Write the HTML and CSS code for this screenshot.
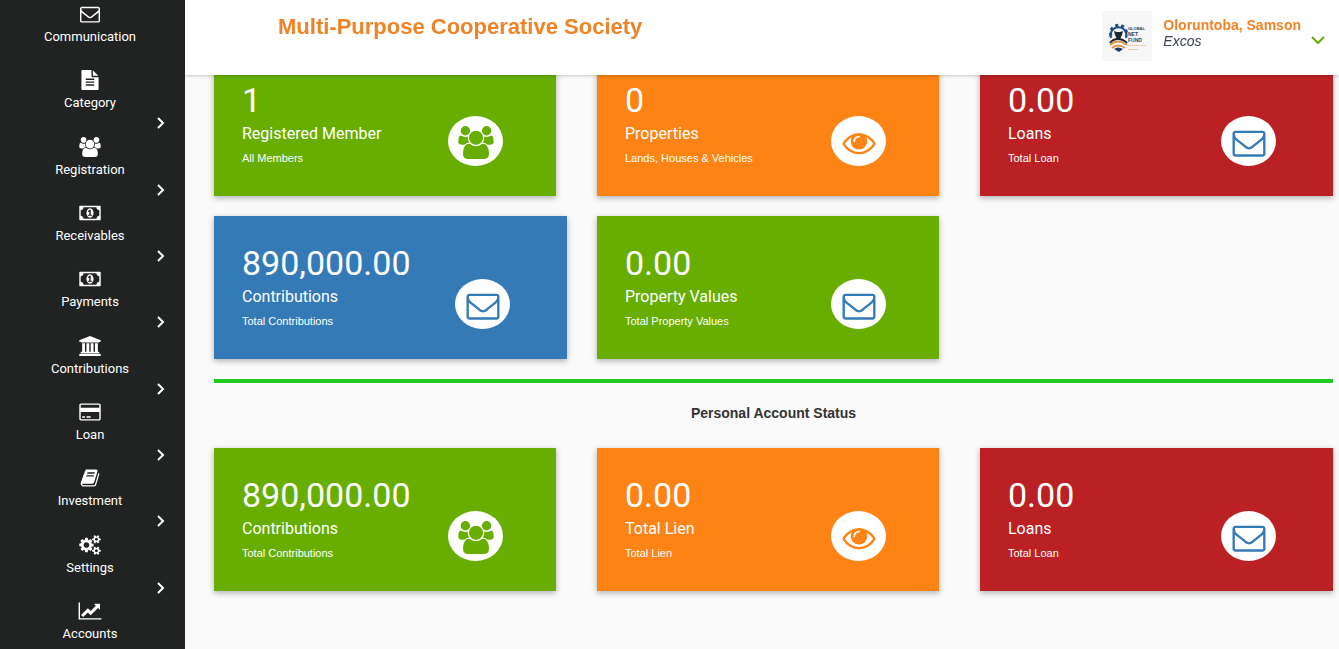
FILE: index.html
```html
<!DOCTYPE html>
<html lang="en">

<head>
    <meta charset="UTF-8">
    <meta name="viewport" content="width=device-width, initial-scale=1.0">
    <title>Multi-Purpose Cooperative Society</title>
    <link rel="stylesheet" href="styles.css">
</head>

<body>
    <!-- shared icons -->
    <svg class="sprite" aria-hidden="true">
        <symbol id="envelope" viewBox="0 0 1792 1792">
            <path d="M1664 1504v-768q-32 36-69 66-268 206-426 338-51 43-83 67t-86.500 48.500-102.500 24.500h-2q-48 0-102.500-24.500t-86.500-48.500-83-67q-158-132-426-338-37-30-69-66v768q0 13 9.500 22.500t22.500 9.500h1472q13 0 22.500-9.500t9.500-22.500zm0-1051v-24.500l-.5-13-3-12.500-5.500-9-9-7.500-14-2.500h-1472q-13 0-22.500 9.500t-9.500 22.500q0 168 147 284 193 152 401 317 6 5 35 29.500t46 37.500 44.500 31.500 50.500 27.500 43 9h2q20 0 43-9t50.500-27.500 44.500-31.500 46-37.500 35-29.500q208-165 401-317 54-43 100.500-115.500t46.500-131.500zm128-37v1088q0 66-47 113t-113 47h-1472q-66 0-113-47t-47-113v-1088q0-66 47-113t113-47h1472q66 0 113 47t47 113z"/>
        </symbol>
        <symbol id="users" viewBox="0 0 1920 1792">
            <path d="M593 896q-162 5-265 128h-134q-82 0-138-40.500t-56-118.500q0-353 124-353 6 0 43.500 21t97.500 42.500 119 21.500q67 0 133-23-5 37-5 66 0 139 81 256zm1071 637q0 120-73 189.500t-194 69.500h-874q-121 0-194-69.500t-73-189.500q0-53 3.500-103.500t14-109 26.500-108.500 43-97.500 62-81 85.500-53.500 111.500-20q10 0 43 21.500t73 48 107 48 135 21.500 135-21.500 107-48 73-48 43-21.500q61 0 111.500 20t85.500 53.500 62 81 43 97.500 26.500 108.500 14 109 3.500 103.500zm-1024-1277q0 106-75 181t-181 75-181-75-75-181 75-181 181-75 181 75 75 181zm704 384q0 159-112.500 271.500t-271.500 112.500-271.500-112.500-112.500-271.500 112.500-271.500 271.500-112.500 271.500 112.500 112.500 271.500zm576 225q0 78-56 118.500t-138 40.500h-134q-103-123-265-128 81-117 81-256 0-29-5-66 66 23 133 23 59 0 119-21.500t97.500-42.500 43.500-21q124 0 124 353zm-128-609q0 106-75 181t-181 75-181-75-75-181 75-181 181-75 181 75 75 181z"/>
        </symbol>
        <symbol id="eye" viewBox="0 0 1792 1792">
            <path d="M1664 960q-152-236-381-353 61 104 61 225 0 185-131.500 316.500t-316.500 131.500-316.500-131.500-131.500-316.500q0-121 61-225-229 117-381 353 133 205 333.500 326.500t434.500 121.500 434.500-121.500 333.500-326.500zm-720-384q0-20-14-34t-34-14q-125 0-214.500 89.500t-89.500 214.500q0 20 14 34t34 14 34-14 14-34q0-86 61-147t147-61q20 0 34-14t14-34zm848 384q0 34-20 69-140 230-376.500 368.500t-499.500 138.500-499.500-139-376.500-368q-20-35-20-69t20-69q140-229 376.500-368t499.500-139 499.500 139 376.500 368q20 35 20 69z"/>
        </symbol>
        <symbol id="file" viewBox="0 0 1792 1792">
            <path d="M1596 476q14 14 28 36h-472v-472q22 14 36 28zm-476 164h544v1056q0 40-28 68t-68 28h-1344q-40 0-68-28t-28-68v-1600q0-40 28-68t68-28h800v544q0 40 28 68t68 28zm160 736v-64q0-14-9-23t-23-9h-704q-14 0-23 9t-9 23v64q0 14 9 23t23 9h704q14 0 23-9t9-23zm0-256v-64q0-14-9-23t-23-9h-704q-14 0-23 9t-9 23v64q0 14 9 23t23 9h704q14 0 23-9t9-23zm0-256v-64q0-14-9-23t-23-9h-704q-14 0-23 9t-9 23v64q0 14 9 23t23 9h704q14 0 23-9t9-23z"/>
        </symbol>
        <symbol id="money" viewBox="0 0 1920 1792">
            <path fill-rule="evenodd" d="M768 1152h384v-96h-128v-448h-114l-148 137 77 80q42-37 55-57h2v288h-128v96zm512-256q0 70-21 142t-59.500 134-101.500 101-138 39-138-39-101.500-101-59.500-134-21-142 21-142 59.500-134 101.500-101 138-39 138 39 101.500 101 59.500 134 21 142zm512 256v-512q-106 0-181-75t-75-181h-1152q0 106-75 181t-181 75v512q106 0 181 75t75 181h1152q0-106 75-181t181-75zm128-832v1152q0 26-19 45t-45 19h-1792q-26 0-45-19t-19-45v-1152q0-26 19-45t45-19h1792q26 0 45 19t19 45z"/>
        </symbol>
        <symbol id="bank" viewBox="0 0 1920 1792">
            <path d="M960 0l960 384v128h-128q0 26-20.500 45t-48.500 19h-1526q-28 0-48.500-19t-20.500-45h-128v-128zm-704 640h256v768h128v-768h256v768h128v-768h256v768h128v-768h256v768h59q28 0 48.500 19t20.500 45v64h-1664v-64q0-26 20.500-45t48.500-19h59v-768zm1595 960q28 0 48.500 19t20.500 45v128h-1920v-128q0-26 20.500-45t48.500-19h1782z"/>
        </symbol>
        <symbol id="card" viewBox="0 0 1920 1792">
            <path fill-rule="evenodd" d="M160 128h1600q66 0 113 47t47 113v1216q0 66-47 113t-113 47h-1600q-66 0-113-47t-47-113v-1216q0-66 47-113t113-47zm0 128q-32 0-32 32v224h1664v-224q0-32-32-32zm-32 640v608q0 32 32 32h1600q32 0 32-32v-608zm128 384h256v128h-256zm384 0h384v128h-384z"/>
        </symbol>
        <symbol id="book" viewBox="0 0 1792 1792">
            <path d="M1703 478q40 57 18 129l-275 906q-19 64-76.500 107.500t-122.500 43.500h-923q-77 0-148.500-53.500t-99.500-131.500q-24-67-2-127 0-4 3-27t4-37q1-8-3-21.500t-3-19.500q2-11 8-21t16.500-23.500 16.500-23.500q23-38 45-91.500t30-91.500q3-10 .5-30t-.5-28q3-11 17-28t17-23q21-36 42-92t25-90q1-9-2.500-32t.5-28q4-13 22-30.500t22-22.500q19-26 42.500-84.500t27.500-96.500q1-8-3-25.500t-2-26.500q2-8 9-18t18-23 17-21q8-12 16.500-30.500t15-35 16-36 19.500-32 26.500-23.500 36-11.500 47.500 5.500l-1 3q38-9 51-9h761q74 0 114 56t18 130l-274 906q-36 119-71.500 153.500t-128.500 34.500h-869q-27 0-38 15-11 16-1 43 24 70 144 70h923q29 0 56-15.500t35-41.500l300-987q7-22 5-57 38 15 59 43zm-1064 2q-4 13 2 22.500t20 9.500h608q13 0 25.500-9.500t16.500-22.500l21-64q4-13-2-22.500t-20-9.500h-608q-13 0-25.500 9.500t-16.500 22.500zm-83 256q-4 13 2 22.500t20 9.500h608q13 0 25.500-9.500t16.500-22.500l21-64q4-13-2-22.500t-20-9.500h-608q-13 0-25.500 9.500t-16.500 22.500z"/>
        </symbol>
        <symbol id="cogs" viewBox="0 0 1920 1792">
            <path fill-rule="evenodd" d="M896 896q0-106-75-181t-181-75-181 75-75 181 75 181 181 75 181-75 75-181zm384-91v185q0 10-7 19.500t-16 10.500l-155 24q-11 35-32 76 34 48 90 115 7 11 7 20 0 12-7 19-23 30-82.500 89.500t-78.500 59.500q-11 0-21-7l-115-90q-37 19-77 31-11 108-23 155-7 24-30 24h-186q-11 0-20-7.500t-10-17.500l-23-153q-34-10-75-31l-118 89q-7 7-20 7-11 0-21-8-144-133-144-160 0-9 7-19 10-14 41-53t47-61q-23-44-35-82l-152-24q-10-1-17-9.500t-7-19.500v-185q0-10 7-19.500t16-10.500l155-24q11-35 32-76-34-48-90-115-7-11-7-20 0-12 7-20 22-30 82-89t79-59q11 0 21 7l115 90q34-18 77-32 11-108 23-154 7-24 30-24h186q11 0 20 7.500t10 17.500l23 153q34 10 75 31l118-89q8-7 20-7 11 0 21 8 144 133 144 160 0 8-7 19-12 16-42 54t-45 60q23 48 34 82l152 23q10 2 17 10.500t7 19.500z"/>
            <path id="cog" fill-rule="evenodd" d="M1664 1408q0-52-38-90t-90-38-90 38-38 90q0 53 37.500 90.500t90.500 37.500 90.500-37.500 37.500-90.500zM1920 1338v140q0 16-149 31-12 27-30 52 51 113 51 138 0 4-4 7-122 71-124 71-8 0-46-47t-52-68q-20 2-30 2t-30-2q-14 21-52 68t-46 47q-2 0-124-71-4-3-4-7 0-25 51-138-18-25-30-52-149-15-149-31v-140q0-16 149-31 13-29 30-52-51-113-51-138 0-4 4-7 4-2 35-20t59-34 30-16q8 0 46 46.500t52 67.500q20-2 30-2t30 2q51-71 92-112l6-2q4 0 124 70 4 3 4 7 0 25-51 138 17 23 30 52 149 15 149 31z"/>
            <use href="#cog" y="-1024"/>
        </symbol>
        <symbol id="chart" viewBox="0 0 2048 1792">
            <path d="M2048 1536v128h-2048v-1536h128v1408h1920zm-128-1248v435q0 21-19.500 29.500t-35.500-7.500l-121-121-633 633q-10 10-23 10t-23-10l-233-233-416 416-192-192 585-585q10-10 23-10t23 10l233 233 464-464-121-121q-16-16-7.500-35.500t29.500-19.500h435q14 0 23 9t9 23z"/>
        </symbol>
        <symbol id="arrow" viewBox="0 0 8 12">
            <path d="M1 1l5 5-5 5" fill="none" stroke="currentColor" stroke-width="2"/>
        </symbol>
    </svg>

    <nav class="sidebar">
        <ul class="menu">
            <li><a href="#"><svg class="icon"><use href="#envelope"/></svg>Communication</a></li>
            <li><a href="#"><svg class="icon"><use href="#file"/></svg>Category<svg class="arrow"><use href="#arrow"/></svg></a></li>
            <li><a href="#"><svg class="icon"><use href="#users"/></svg>Registration<svg class="arrow"><use href="#arrow"/></svg></a></li>
            <li><a href="#"><svg class="icon"><use href="#money"/></svg>Receivables<svg class="arrow"><use href="#arrow"/></svg></a></li>
            <li><a href="#"><svg class="icon"><use href="#money"/></svg>Payments<svg class="arrow"><use href="#arrow"/></svg></a></li>
            <li><a href="#"><svg class="icon"><use href="#bank"/></svg>Contributions<svg class="arrow"><use href="#arrow"/></svg></a></li>
            <li><a href="#"><svg class="icon"><use href="#card"/></svg>Loan<svg class="arrow"><use href="#arrow"/></svg></a></li>
            <li><a href="#"><svg class="icon"><use href="#book"/></svg>Investment<svg class="arrow"><use href="#arrow"/></svg></a></li>
            <li><a href="#"><svg class="icon"><use href="#cogs"/></svg>Settings<svg class="arrow"><use href="#arrow"/></svg></a></li>
            <li><a href="#"><svg class="icon"><use href="#chart"/></svg>Accounts</a></li>
        </ul>
    </nav>

    <header class="header">
        <h1>Multi-Purpose Cooperative Society</h1>
        <button class="account" type="button">
            <svg class="logo" viewBox="0 0 50 50" role="img" aria-label="Global Net Fund">
                <rect width="50" height="50" fill="#f7f7f7"/>
                <!-- half gear with teeth -->
                <path d="M9 27a8 8 0 1 1 15 0" fill="none" stroke="#1c4f86" stroke-width="2"/>
                <path d="M9 25a8 8 0 1 1 15 0" fill="none" stroke="#1c4f86" stroke-width="3" stroke-dasharray="3 3"/>
                <path d="M12 20l3 1h3l3-1-1 4-2 4h-3l-2-4z" fill="#1d2633"/>
                <path d="M8 32q3-4 8-4t9 4" fill="none" stroke="#1d2633" stroke-width="2"/>
                <path d="M8 34q8-7 17 0M10 37q6-5 13 0" fill="none" stroke="#e0964f" stroke-width="2"/>
                <path d="M12 38q4-3 9 0l-4 3z" fill="#1c3c66"/>
                <g font-family="Liberation Sans, Arial, sans-serif" font-weight="bold" font-size="5" fill="#1d4463">
                    <text x="26" y="19" font-size="4">GLOBAL</text>
                    <text x="26" y="25">NET</text>
                    <text x="26" y="31">FUND</text>
                </g>
                <g font-family="Liberation Sans, Arial, sans-serif" font-weight="bold" font-size="2.500" fill="#e0964f">
                    <text x="26" y="35">COOPERATIVE</text>
                    <text x="26" y="39">SOCIETY</text>
                </g>
            </svg>
            <span class="who">
                <strong>Oloruntoba, Samson</strong>
                <em>Excos</em>
            </span>
            <svg class="caret" viewBox="0 0 14 8"><path d="M1 1l6 6 6-6" fill="none" stroke="currentColor" stroke-width="2"/></svg>
        </button>
    </header>

    <main class="content">
        <section class="cards">
            <div class="card green narrow">
                <div class="card-text">
                    <p class="number">1</p>
                    <h3>Registered Member</h3>
                    <p class="note">All Members</p>
                </div>
                <span class="bubble"><svg><use href="#users"/></svg></span>
            </div>
            <div class="card orange narrow">
                <div class="card-text">
                    <p class="number">0</p>
                    <h3>Properties</h3>
                    <p class="note">Lands, Houses &amp; Vehicles</p>
                </div>
                <span class="bubble"><svg><use href="#eye"/></svg></span>
            </div>
            <div class="card red">
                <div class="card-text">
                    <p class="number">0.00</p>
                    <h3>Loans</h3>
                    <p class="note">Total Loan</p>
                </div>
                <span class="bubble mail"><svg><use href="#envelope"/></svg></span>
            </div>
            <div class="card blue">
                <div class="card-text">
                    <p class="number">890,000.00</p>
                    <h3>Contributions</h3>
                    <p class="note">Total Contributions</p>
                </div>
                <span class="bubble mail"><svg><use href="#envelope"/></svg></span>
            </div>
            <div class="card green narrow">
                <div class="card-text">
                    <p class="number">0.00</p>
                    <h3>Property Values</h3>
                    <p class="note">Total Property Values</p>
                </div>
                <span class="bubble mail"><svg><use href="#envelope"/></svg></span>
            </div>
        </section>

        <hr>
        <h2>Personal Account Status</h2>

        <section class="cards">
            <div class="card green narrow">
                <div class="card-text">
                    <p class="number">890,000.00</p>
                    <h3>Contributions</h3>
                    <p class="note">Total Contributions</p>
                </div>
                <span class="bubble"><svg><use href="#users"/></svg></span>
            </div>
            <div class="card orange narrow">
                <div class="card-text">
                    <p class="number">0.00</p>
                    <h3>Total Lien</h3>
                    <p class="note">Total Lien</p>
                </div>
                <span class="bubble"><svg><use href="#eye"/></svg></span>
            </div>
            <div class="card red">
                <div class="card-text">
                    <p class="number">0.00</p>
                    <h3>Loans</h3>
                    <p class="note">Total Loan</p>
                </div>
                <span class="bubble mail"><svg><use href="#envelope"/></svg></span>
            </div>
        </section>
    </main>
</body>
</html>
```
FILE: styles.css
```css
* {
    box-sizing: border-box;
}
body {
    margin: 0;
    background: #fafafa;
    color: #333;
    font-family: "Liberation Sans", Arial, sans-serif;
}
h1, h2, h3, p, ul {
    margin: 0;
    padding: 0;
}
.sprite {
    position: absolute;
    width: 0;
    height: 0;
}

/* sidebar */
.sidebar {
    position: fixed;
    top: 0;
    bottom: 0;
    left: 0;
    width: 185px;
    background: #212322;
}
.menu {
    display: flex;
    flex-direction: column;
    justify-content: space-between;
    height: 100%;
    list-style: none;
}
.menu a {
    position: relative;
    display: flex;
    flex-direction: column;
    align-items: center;
    padding: 4px 5px 5px 0;
    color: #fff;
    font-family: Roboto, sans-serif;
    font-size: 13px;
    line-height: 20px;
    text-decoration: none;
}
.icon {
    width: 24px;
    height: 20px;
    margin-bottom: 3px;
    fill: currentColor;
}
.arrow {
    position: absolute;
    right: 20px;
    bottom: -11px;
    width: 8px;
    height: 12px;
}

/* header */
.header {
    position: fixed;
    top: 0;
    left: 185px;
    right: 0;
    z-index: 1;
    display: flex;
    justify-content: space-between;
    align-items: flex-start;
    height: 75px;
    padding: 11px 14px 0 93px;
    background: #fff;
    box-shadow: 0 1px 3px rgba(0, 0, 0, 0.2);
}
.header h1 {
    color: #ee8427;
    font-size: 22px;
    line-height: 32px;
}
.account {
    display: flex;
    padding: 0;
    border: none;
    background: none;
    font-family: inherit;
    text-align: left;
    cursor: pointer;
}
.logo {
    width: 50px;
    height: 50px;
    margin-right: 11px;
}
.who {
    display: flex;
    flex-direction: column;
    padding-top: 6px;
    font-size: 14px;
    line-height: 16px;
}
.who strong {
    color: #ee8427;
}
.who em {
    color: #3a4450;
}
.caret {
    width: 14px;
    height: 8px;
    margin: 25px 0 0 10px;
    color: #66ad00;
}

/* dashboard */
.content {
    margin-left: 185px;
    padding: 53px 6px 40px 29px;
}
.cards {
    display: grid;
    grid-template-columns: repeat(3, 1fr);
    gap: 20px 30px;
}
.card {
    display: grid;
    grid-template-columns: 2fr 1fr;
    padding: 27px 0 26px;
    color: #fff;
    box-shadow: 0 2px 6px rgba(0, 0, 0, 0.3);
}
.narrow {
    margin-right: 11px;
}
.green {
    background: #68ae00;
    --tone: #68ae00;
}
.orange {
    background: #fd8314;
    --tone: #fd8314;
}
.red {
    background: #ba2024;
}
.blue {
    background: #347ab6;
}
.card-text {
    padding-left: 28px;
    white-space: nowrap;
}
.number {
    margin-bottom: 2px;
    font-family: Roboto, sans-serif;
    font-size: 34px;
    line-height: 40px;
}
.card h3 {
    font-family: Roboto, sans-serif;
    font-size: 16px;
    font-weight: normal;
    line-height: 24px;
}
.note {
    font-size: 11px;
    line-height: 24px;
}
.bubble {
    display: flex;
    justify-content: center;
    align-items: center;
    width: 55px;
    height: 50px;
    margin: 36px 0 0 6px;
    padding-top: 2px;
    border-radius: 50%;
    background: #fff;
}
.bubble svg {
    width: 36px;
    height: 33px;
    fill: var(--tone);
}
.mail {
    --tone: #347ab6;
}
hr {
    height: 4px;
    margin: 20px 0;
    border: none;
    background: #1dcb22;
}
h2 {
    margin-bottom: 25px;
    font-size: 14px;
    line-height: 20px;
    text-align: center;
}
```
